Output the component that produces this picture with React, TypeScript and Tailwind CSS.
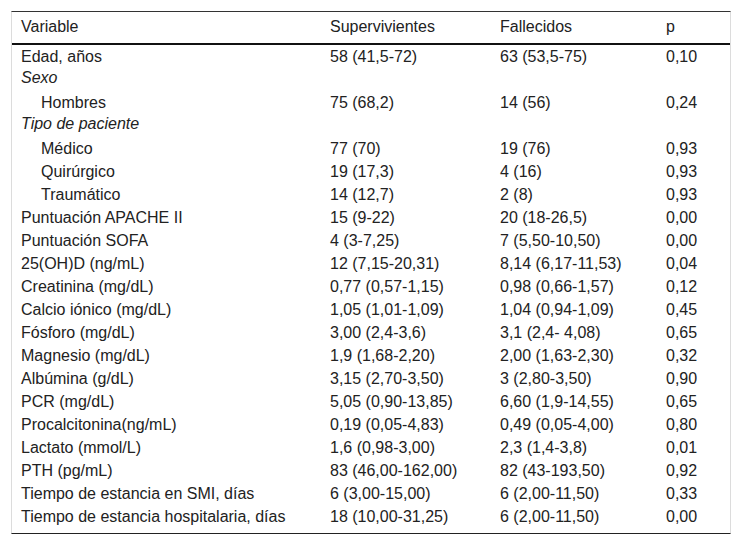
// Tabla de características de pacientes: supervivientes vs fallecidos

type Fila = {
  variable: string;
  sup?: string;
  fal?: string;
  p?: string;
  tipo?: 'grupo' | 'sub';
};

const filas: Fila[] = [
  { variable: 'Edad, años', sup: '58 (41,5-72)', fal: '63 (53,5-75)', p: '0,10' },
  { variable: 'Sexo', tipo: 'grupo' },
  { variable: 'Hombres', sup: '75 (68,2)', fal: '14 (56)', p: '0,24', tipo: 'sub' },
  { variable: 'Tipo de paciente', tipo: 'grupo' },
  { variable: 'Médico', sup: '77 (70)', fal: '19 (76)', p: '0,93', tipo: 'sub' },
  { variable: 'Quirúrgico', sup: '19 (17,3)', fal: '4 (16)', p: '0,93', tipo: 'sub' },
  { variable: 'Traumático', sup: '14 (12,7)', fal: '2 (8)', p: '0,93', tipo: 'sub' },
  { variable: 'Puntuación APACHE II', sup: '15 (9-22)', fal: '20 (18-26,5)', p: '0,00' },
  { variable: 'Puntuación SOFA', sup: '4 (3-7,25)', fal: '7 (5,50-10,50)', p: '0,00' },
  { variable: '25(OH)D (ng/mL)', sup: '12 (7,15-20,31)', fal: '8,14 (6,17-11,53)', p: '0,04' },
  { variable: 'Creatinina (mg/dL)', sup: '0,77 (0,57-1,15)', fal: '0,98 (0,66-1,57)', p: '0,12' },
  { variable: 'Calcio iónico (mg/dL)', sup: '1,05 (1,01-1,09)', fal: '1,04 (0,94-1,09)', p: '0,45' },
  { variable: 'Fósforo (mg/dL)', sup: '3,00 (2,4-3,6)', fal: '3,1 (2,4- 4,08)', p: '0,65' },
  { variable: 'Magnesio (mg/dL)', sup: '1,9 (1,68-2,20)', fal: '2,00 (1,63-2,30)', p: '0,32' },
  { variable: 'Albúmina (g/dL)', sup: '3,15 (2,70-3,50)', fal: '3 (2,80-3,50)', p: '0,90' },
  { variable: 'PCR (mg/dL)', sup: '5,05 (0,90-13,85)', fal: '6,60 (1,9-14,55)', p: '0,65' },
  { variable: 'Procalcitonina(ng/mL)', sup: '0,19 (0,05-4,83)', fal: '0,49 (0,05-4,00)', p: '0,80' },
  { variable: 'Lactato (mmol/L)', sup: '1,6 (0,98-3,00)', fal: '2,3 (1,4-3,8)', p: '0,01' },
  { variable: 'PTH (pg/mL)', sup: '83 (46,00-162,00)', fal: '82 (43-193,50)', p: '0,92' },
  { variable: 'Tiempo de estancia en SMI, días', sup: '6 (3,00-15,00)', fal: '6 (2,00-11,50)', p: '0,33' },
  { variable: 'Tiempo de estancia hospitalaria, días', sup: '18 (10,00-31,25)', fal: '6 (2,00-11,50)', p: '0,00' },
];

const cols = 'grid grid-cols-[309px_170px_166px_73px]';

export default function App() {
  return (
    <div className="min-h-[545px] bg-white pt-[11px] pl-[11px] font-['Liberation_Sans',Arial,sans-serif] text-[16px] leading-[23px] text-[#222]">
      <div className="w-[720px] border-x border-t border-b border-x-[#dcdcdc] border-t-[#333] border-b-[#222]">
        <div className={`${cols} pt-[3px] pb-[5px] border-b-2 border-[#111]`}>
          <div className="pl-[9px]">Variable</div>
          <div className="pl-[9px]">Supervivientes</div>
          <div className="pl-[9px]">Fallecidos</div>
          <div className="pl-[9px]">p</div>
        </div>
        <div className="pb-[5px]">
          {filas.map((f) => (
            <div key={f.variable} className={`${cols} h-[23px]`}>
              <div
                className={
                  f.tipo === 'grupo'
                    ? 'pl-[9px] italic leading-[19px]'
                    : f.tipo === 'sub'
                    ? 'pl-[29px]'
                    : 'pl-[9px]'
                }
              >
                {f.variable}
              </div>
              <div className="pl-[9px]">{f.sup}</div>
              <div className="pl-[9px]">{f.fal}</div>
              <div className="pl-[9px]">{f.p}</div>
            </div>
          ))}
        </div>
      </div>
    </div>
  );
}
